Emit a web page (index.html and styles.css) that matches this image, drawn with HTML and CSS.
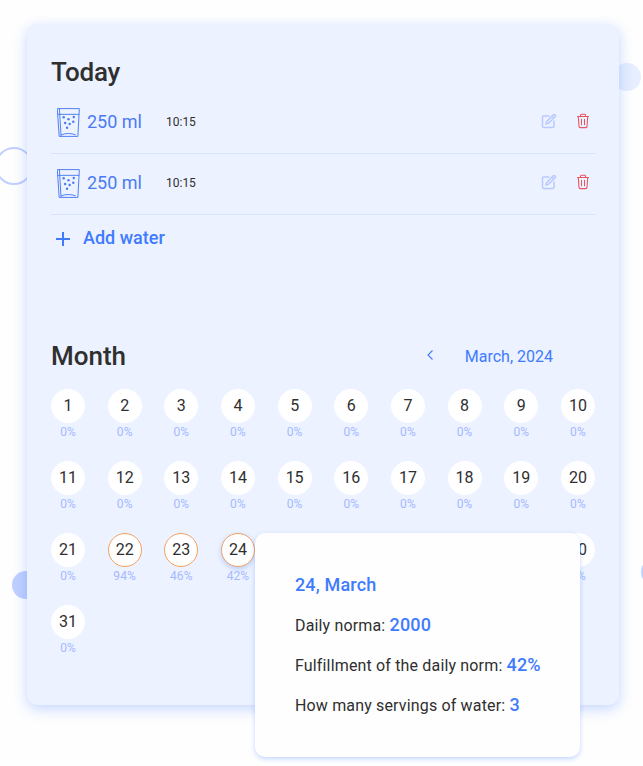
FILE: index.html
```html
<!DOCTYPE html>
<html lang="en">
<head>
<meta charset="utf-8">
<title>Water tracker</title>
<link rel="stylesheet" href="styles.css">
</head>
<body>
<svg class="sprite" aria-hidden="true">
  <symbol id="glass" viewBox="0 0 24 32">
    <g fill="none" stroke="currentColor" stroke-width="1" stroke-linejoin="round" stroke-linecap="round">
      <path d="M.7 1.5h22.600L21.800 30.500H2.700z"/>
      <path d="M1.200 7.500h21.600M2.500 1.700L4.200 29.800M4.700 28.800c4-1.800 10-1.800 14.500 0"/>
    </g>
    <g fill="currentColor"><circle cx="7" cy="10.500" r="1.250"/><circle cx="12" cy="12.500" r="1.250"/><circle cx="17.500" cy="10.300" r="1.250"/><circle cx="8.500" cy="16.500" r="1.250"/><circle cx="13.200" cy="17.500" r="1.250"/><circle cx="17" cy="15.200" r="1.250"/><circle cx="10.500" cy="21.500" r="1.250"/></g>
  </symbol>
  <symbol id="edit" viewBox="0 0 16 16">
    <path fill="none" stroke="currentColor" stroke-width="1.500" stroke-linecap="round" stroke-linejoin="round" d="M8 3H2.700A1.200 1.200 0 0 0 1.500 4.200v9.100a1.200 1.200 0 0 0 1.200 1.200h9.100a1.200 1.200 0 0 0 1.200-1.200V8M12.300 1.900a1.250 1.250 0 0 1 1.800 1.800L7.500 10.300 4.900 11.100 5.700 8.500zM11 3.200l1.800 1.800"/>
  </symbol>
  <symbol id="trash" viewBox="0 0 16 16">
    <path fill="none" stroke="currentColor" stroke-width="1.050" stroke-linecap="round" stroke-linejoin="round" d="M2.500 3.500h11M5.500 3.300V2.200q0-.9.900-.9h3.200q.9 0 .9.900v1.100M3.300 3.700l.7 9.700q.1 1.200 1.300 1.200h5.400q1.200 0 1.300-1.200l.7-9.700M6.500 6.200v5.600M9.500 6.200v5.600"/>
  </symbol>
</svg>
<div class="bubble bubble-ring"></div>
<div class="bubble bubble-pale"></div>
<div class="bubble bubble-left"></div>
<div class="bubble bubble-right"></div>
<main class="card">
  <section class="today">
    <h2>Today</h2>
    <ul class="records">
      <li><svg class="glass"><use href="#glass"/></svg><span class="volume">250 ml</span><span class="time">10:15</span><span class="actions"><svg class="edit"><use href="#edit"/></svg><svg class="trash"><use href="#trash"/></svg></span></li>
      <li><svg class="glass"><use href="#glass"/></svg><span class="volume">250 ml</span><span class="time">10:15</span><span class="actions"><svg class="edit"><use href="#edit"/></svg><svg class="trash"><use href="#trash"/></svg></span></li>
    </ul>
    <button class="add"><svg viewBox="0 0 14 14"><path d="M7 0v14M0 7h14"/></svg>Add water</button>
  </section>
  <section class="month">
    <header>
      <h2>Month</h2>
      <div class="pager"><svg viewBox="0 0 8 12"><path d="M6.500 1.500L2 6l4.500 4.500"/></svg><span>March, 2024</span></div>
    </header>
    <ol class="days">
      <li><b>1</b><i>0%</i></li><li><b>2</b><i>0%</i></li><li><b>3</b><i>0%</i></li><li><b>4</b><i>0%</i></li><li><b>5</b><i>0%</i></li>
      <li><b>6</b><i>0%</i></li><li><b>7</b><i>0%</i></li><li><b>8</b><i>0%</i></li><li><b>9</b><i>0%</i></li><li><b>10</b><i>0%</i></li>
      <li><b>11</b><i>0%</i></li><li><b>12</b><i>0%</i></li><li><b>13</b><i>0%</i></li><li><b>14</b><i>0%</i></li><li><b>15</b><i>0%</i></li>
      <li><b>16</b><i>0%</i></li><li><b>17</b><i>0%</i></li><li><b>18</b><i>0%</i></li><li><b>19</b><i>0%</i></li><li><b>20</b><i>0%</i></li>
      <li><b>21</b><i>0%</i></li><li class="partial"><b>22</b><i>94%</i></li><li class="partial"><b>23</b><i>46%</i></li>
      <li class="partial active"><b>24</b><i>42%</i>
        <div class="popover">
          <p class="date">24, March</p>
          <p>Daily norma: <strong>2000</strong></p>
          <p>Fulfillment of the daily norm: <strong>42%</strong></p>
          <p>How many servings of water: <strong>3</strong></p>
        </div>
      </li>
      <li></li><li></li><li></li><li></li><li></li>
      <li><b>30</b><i>0%</i></li><li><b>31</b><i>0%</i></li>
    </ol>
  </section>
</main>
</body>
</html>
```
FILE: styles.css
```css
* { box-sizing: border-box; margin: 0; padding: 0; }
body {
  position: relative;
  height: 766px;
  padding: 24px 24px 0 27px;
  overflow: hidden;
  background: #fefefe;
  color: #2f2f2f;
  font: 16px/20px Roboto, sans-serif;
}
ul, ol { list-style: none; }
.sprite { position: absolute; width: 0; height: 0; }

.bubble { position: absolute; border-radius: 50%; }
.bubble-ring { left: -5px; top: 147px; width: 38px; height: 38px; border: 2px solid #c2ceff; }
.bubble-pale { left: 613px; top: 63px; width: 28px; height: 28px; background: #e6eeff; }
.bubble-left { left: 12px; top: 571px; width: 28px; height: 28px; background: #bfcfff; }
.bubble-right { left: 641px; top: 558px; width: 28px; height: 28px; background: #bfcfff; }

.card {
  position: relative;
  width: 592px;
  height: 681px;
  padding: 32px 24px;
  border-radius: 10px;
  background: #ecf2ff;
  box-shadow: 0 4px 14px rgba(64, 123, 255, 0.3);
}
h2 { font-size: 26px; line-height: 32px; font-weight: 500; }

.today { height: 284px; }
.today h2 { letter-spacing: -0.2px; }
.records { margin-top: 5px; }
.records li {
  display: flex;
  align-items: center;
  height: 61px;
  padding: 0 4px 2px 6px;
  border-bottom: 1px solid #d7e3ff;
  color: #4a7bf3;
}
.glass { width: 23px; height: 31px; margin-top: 1px; }
.volume { margin-left: 7px; font-size: 18px; line-height: 24px; }
.time { margin-left: 24px; color: #2f2f2f; font-size: 12px; line-height: 24px; }
.actions { display: flex; gap: 18px; margin: -2px 0 0 auto; }
.actions svg { width: 16px; height: 16px; }
.edit { color: #b9caff; }
.trash { color: #e85560; }
.add {
  display: flex;
  align-items: center;
  gap: 13px;
  margin: 11px 0 0 5px;
  border: 0;
  background: none;
  color: #407bff;
  font: 500 18px/24px Roboto, sans-serif;
}
.add svg { width: 14px; height: 14px; margin-top: 2px; }
.add path { stroke: currentColor; stroke-width: 2; }

.month header { display: flex; justify-content: space-between; align-items: center; }
.pager { display: flex; align-items: center; gap: 31px; padding: 2px 42px 0 0; color: #407bff; }
.pager svg { width: 8px; height: 12px; margin-top: -4px; }
.pager path { fill: none; stroke: currentColor; stroke-width: 1.100; }

.days {
  display: grid;
  grid-template-columns: repeat(10, 34px);
  grid-auto-rows: 52px;
  justify-content: space-between;
  row-gap: 20px;
  margin-top: 17px;
}
.days li { position: relative; display: flex; flex-direction: column; align-items: center; }
.days b {
  display: flex;
  align-items: center;
  justify-content: center;
  width: 34px;
  height: 34px;
  border-radius: 50%;
  background: #fff;
  font-weight: 400;
}
.days i { color: #a5b9ff; font-size: 12px; line-height: 18px; font-style: normal; letter-spacing: 0.1px; }
.days .partial b { border: 1px solid #f5a060; }
.days .active { z-index: 1; }
.active b { box-shadow: 0 2px 5px rgba(64, 123, 255, 0.3); }

.popover {
  position: absolute;
  left: 34px;
  top: 0;
  width: 325px;
  height: 224px;
  padding: 40px;
  border-radius: 10px;
  background: #fefefe;
  box-shadow: 0 2px 5px rgba(64, 123, 255, 0.3);
  letter-spacing: 0.16px;
  white-space: nowrap;
}
.popover p { height: 24px; margin-bottom: 16px; line-height: 24px; }
.popover .date, .popover strong { color: #407bff; font-size: 18px; font-weight: 500; }
```
